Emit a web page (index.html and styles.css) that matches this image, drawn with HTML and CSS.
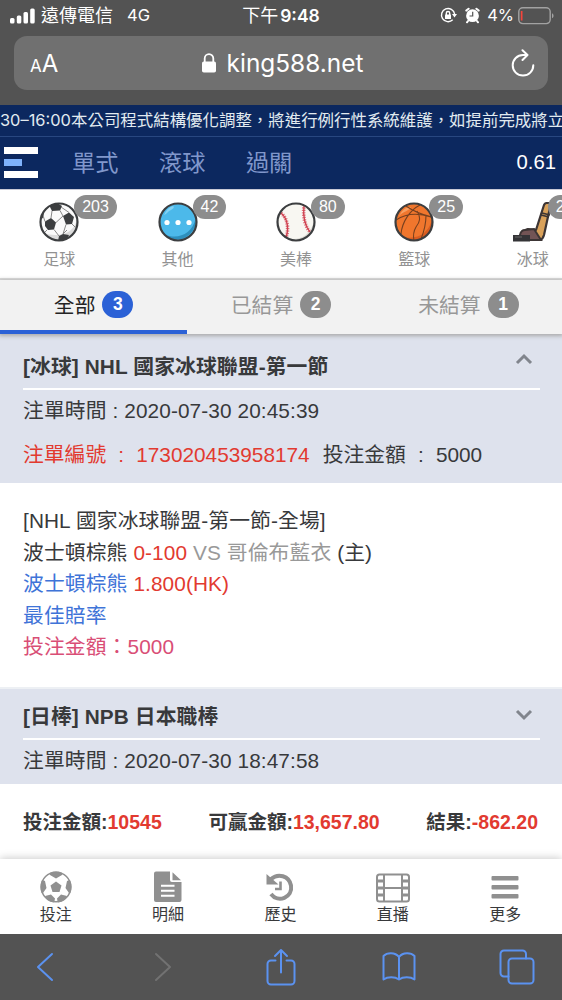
FILE: index.html
```html
<!DOCTYPE html>
<html lang="zh-Hant">
<head>
<meta charset="utf-8">
<title>king588.net</title>
<link rel="stylesheet" href="styles.css">
</head>
<body>
<div class="phone">
  <header class="browser-top">
    <div class="status">
      <div class="status-left">
        <svg class="signal" width="26" height="17" viewBox="0 0 26 17" fill="#fff"><rect x="0" y="11" width="4.500" height="5.500" rx="1.500"/><rect x="6.800" y="8.500" width="4.500" height="8" rx="1.500"/><rect x="13.500" y="5" width="4.500" height="11.500" rx="1.500"/><rect x="20.200" y="1.500" width="4.500" height="15" rx="1.500"/></svg>
        <span class="carrier">遠傳電信</span><span class="network">4G</span>
      </div>
      <div class="clock"><span>下午</span><b>9:48</b></div>
      <div class="status-right">
        <svg width="17" height="17" viewBox="0 0 17 17" fill="none" stroke="#fff" stroke-width="1.400"><path d="M12.700 12.800A6.600 6.600 0 1 1 14.600 7"/><path d="M12 7h5l-2.500 3.500z" fill="#fff" stroke="none"/><rect x="5" y="7.600" width="6" height="4.400" rx=".6" fill="#fff" stroke="none"/><path d="M6.300 8V6.200a1.700 1.700 0 0 1 3.400 0V8"/></svg>
        <svg class="alarm" width="15" height="17" viewBox="0 0 15 17"><circle cx="7.500" cy="8.700" r="6.400" fill="#fff"/><path d="M1.300 3.600L3.600 1.700M13.700 3.600L11.400 1.700M3 14l-1 1.300M12 14l1 1.300" stroke="#fff" stroke-width="2" stroke-linecap="round"/><path d="M7.700 4.700v4.300H4.500" stroke="#535353" stroke-width="1.200" fill="none"/></svg>
        <span class="percent">4%</span>
        <svg class="battery" width="36" height="18" viewBox="0 0 36 18"><rect x=".8" y=".8" width="31.400" height="15.800" rx="4" fill="none" stroke="#a2a2a2" stroke-width="1.400"/><rect x="2.800" y="4" width="1.700" height="9.500" fill="#f5453c"/><path d="M34 6.300c2 .8 2 4.200 0 5z" fill="#a2a2a2"/></svg>
      </div>
    </div>
    <div class="address">
      <span class="reader"><small>A</small>A</span>
      <span class="host"><svg width="14" height="20" viewBox="0 0 14 20"><rect x="0" y="8.500" width="14" height="11" rx="1.800" fill="#fff"/><path d="M2.700 9V5.500a4.300 4.300 0 0 1 8.600 0V9" fill="none" stroke="#fff" stroke-width="1.800"/></svg><span>king588.net</span></span>
      <svg class="reload" width="24" height="28" viewBox="0 0 24 28" fill="none" stroke="#fff" stroke-width="2" stroke-linecap="round" stroke-linejoin="round"><path d="M16 6H12a10.300 10.300 0 1 0 10.300 10.300M11.500 1.200L16.500 6l-5 5"/></svg>
    </div>
  </header>

  <div class="marquee"><span class="range">30–16:00</span>本公司程式結構優化調整，將進行例行性系統維護，如提前完成將立</div>
  <nav class="modes">
    <div class="menu"><i></i><i></i><i></i></div>
    <span>單式</span><span>滾球</span><span>過關</span>
    <b class="balance">0.61</b>
  </nav>

  <section class="sports">
    <div class="sport"><div class="ball">
      <svg width="40" height="40" viewBox="0 0 40 40"><defs><clipPath id="c1"><circle cx="20" cy="20" r="18.500"/></clipPath></defs><circle cx="20" cy="20" r="18.500" fill="#fafafa"/><g clip-path="url(#c1)"><path d="M38 14c0 12-9 19-22 19-4 0-8-1-12-2l8 9h27z" fill="#dcdcdc"/><g fill="#3c3e40"><path d="M10 3l8-2 5 3-2 4.500-8 .5z"/><path d="M6 19.500l6-3.500 5 4.500-2 7-6 .5-3-4z"/><path d="M24 14l6-3.500 5 4.500-2 7-6 .5z"/><path d="M20 34l4-2 6 1-3 6h-8z"/><path d="M1 11l4-4-.5 8-3.500 4z"/></g><path d="M13 9l-1 7M21 8.500l3 5.500M17 20.500l7-6.500M15 27.500l5 6.500M27 22.500L24 32M5 7l5-2M4.500 15L6 19.500M8 28l-3 3M33 22l3 3M22 5l8 5.500M24 32l4-4" fill="none" stroke="#888" stroke-width="1"/></g><circle cx="20" cy="20" r="18.500" fill="none" stroke="#3c3e40" stroke-width="2.200"/></svg>
      <span class="count">203</span></div><span class="label">足球</span></div>
    <div class="sport"><div class="ball">
      <svg width="40" height="40" viewBox="0 0 40 40"><circle cx="20" cy="20" r="18.500" fill="#4cb9ea"/><path d="M37.500 17a18.500 18.500 0 0 1-31 15.500C20 38 34 32 37.500 17z" fill="#2d8fbd"/><path d="M6 13c2-5 5-8 9-9 2 1 0 3-2 4-3 1-4 4-7 5z" fill="#83d2f4"/><circle cx="20" cy="20" r="18.500" fill="none" stroke="#3c3e40" stroke-width="2.200"/><g fill="#fff"><circle cx="9" cy="20.500" r="2.600"/><circle cx="20" cy="20.500" r="2.600"/><circle cx="31" cy="20.500" r="2.600"/></g></svg>
      <span class="count">42</span></div><span class="label">其他</span></div>
    <div class="sport"><div class="ball">
      <svg width="40" height="40" viewBox="0 0 40 40"><circle cx="20" cy="20" r="18.500" fill="#f8f7f2"/><path d="M37.500 21A18 18 0 0 1 14 37c12 1 20-5 23.500-16z" fill="#deddd6"/><g fill="none" stroke="#df7880"><path d="M5 11c7 6 8 16 5 25M28 3c-1 10 0 20 6 27" stroke-width="3.600" stroke-dasharray="1.200 1.200"/><path d="M5 11c7 6 8 16 5 25M28 3c-1 10 0 20 6 27" stroke="#cf4050" stroke-width="1.300"/></g><circle cx="20" cy="20" r="18.500" fill="none" stroke="#3c3e40" stroke-width="2.200"/></svg>
      <span class="count">80</span></div><span class="label">美棒</span></div>
    <div class="sport"><div class="ball">
      <svg width="40" height="40" viewBox="0 0 40 40"><circle cx="20" cy="20" r="18.500" fill="#f0762d"/><path d="M38 17A18.500 18.500 0 0 1 9 35c15 3 26-4 29-18z" fill="#d95c20"/><path d="M5 14c3-6 7-9 12-9-2 4-7 4-12 9z" fill="#f6a064"/><path d="M12 4c7 5 13 8 26 11M26 3C16 8 8 20 7 32M2 18c9-6 20-8 35-3M23 9c4 7 3 11-1 16-3 5-3 9-2 14M32 13c0 8-1 14-5 24" fill="none" stroke="#77401f" stroke-width="1.100"/><circle cx="20" cy="20" r="18.500" fill="none" stroke="#3c3e40" stroke-width="2.200"/></svg>
      <span class="count">25</span></div><span class="label">籃球</span></div>
    <div class="sport"><div class="ball">
      <svg width="40" height="40" viewBox="0 0 40 40"><path d="M31 3q1-2 3-2h4l-7 32q-1 4-4 5H15l-7-5 2-4 5-2 8 1z" fill="#d9a15a" stroke="#3c3535" stroke-width="2.200" stroke-linejoin="round"/><path d="M7 33q1-5 5-5l9-1 7 11H9z" fill="#725455" stroke="#3c3535" stroke-width="2"/><path d="M28 13l8 2M29 11l8 2" stroke="#3c3535" stroke-width="1.800"/><rect x="0" y="33" width="17" height="6.500" fill="#343437"/><path d="M2 35h7" stroke="#666" stroke-width="1"/></svg>
      <span class="count last">21</span></div><span class="label">冰球</span></div>
  </section>

  <div class="tabs">
    <div class="tab active">全部<b>3</b></div>
    <div class="tab">已結算<b>2</b></div>
    <div class="tab">未結算<b>1</b></div>
  </div>

  <main class="bets">
    <section class="bet-head first">
      <div class="bet-title"><span>[冰球] NHL 國家冰球聯盟-第一節</span><svg width="18" height="12" viewBox="0 0 18 12"><path d="M2 10l7-7 7 7" fill="none" stroke="#81858d" stroke-width="3"/></svg></div>
      <div class="bet-time">注單時間 : 2020-07-30 20:45:39</div>
      <div class="bet-number"><span class="red">注單編號</span><span class="red colon">:</span><span class="red number">173020453958174</span><span>投注金額</span><span class="colon">:</span><span>5000</span></div>
    </section>
    <section class="bet-detail">
      <div>[NHL 國家冰球聯盟-第一節-全場]</div>
      <div>波士頓棕熊 <span class="red">0-100</span> <span class="gray">VS 哥倫布藍衣</span> (主)</div>
      <div><span class="blue">波士頓棕熊</span> <span class="red">1.800(HK)</span></div>
      <div class="blue">最佳賠率</div>
      <div class="pink">投注金額：5000</div>
    </section>
    <section class="bet-head second">
      <div class="bet-title"><span>[日棒] NPB 日本職棒</span><svg width="18" height="12" viewBox="0 0 18 12"><path d="M2 2l7 7 7-7" fill="none" stroke="#81858d" stroke-width="3"/></svg></div>
      <div class="bet-time">注單時間 : 2020-07-30 18:47:58</div>
    </section>
  </main>

  <section class="summary">
    <div>投注金額:<span class="red">10545</span></div>
    <div>可贏金額:<span class="red">13,657.80</span></div>
    <div>結果:<span class="red">-862.20</span></div>
  </section>

  <nav class="bottom-nav">
    <div><svg width="32" height="32" viewBox="0 0 32 32"><defs><clipPath id="c2"><circle cx="16" cy="16" r="15.500"/></clipPath></defs><g clip-path="url(#c2)" fill="#909090"><path d="M16 10.500l5.500 4-2 6.500h-7l-2-6.500zM9 0h14l-1 4-6 3.500L10 4zM0 8l5 2 1.500 7-3.500 5H0zM32 8l-5 2-1.500 7 3.500 5h3zM5 25l6-1.500 4 4-1 5H8zM27 25l-6-1.500-4 4 1 5h6z"/></g><circle cx="16" cy="16" r="14.800" fill="none" stroke="#909090" stroke-width="1.500"/></svg><span>投注</span></div>
    <div><svg width="32" height="32" viewBox="0 0 32 32"><path d="M4 .5h14V9a2 2 0 0 0 2 2h9.500v18a2 2 0 0 1-2 2H4a2 2 0 0 1-2-2V2.500a2 2 0 0 1 2-2zM20.500 1.300L29 9.300h-8.500z" fill="#909090"/><path d="M9 14.800h13.500M9 19.800h13.500M9 24.800h13.500" stroke="#fff" stroke-width="2"/></svg><span>明細</span></div>
    <div><svg width="32" height="32" viewBox="0 0 32 32"><path d="M7 8C14 2 25 4.500 27 14.500c2 12-13 18-20 8.500" fill="none" stroke="#909090" stroke-width="4"/><path d="M2.500 3l12 10.500h-12z" fill="#909090"/><path d="M16.500 10.500v7.500h-5.500" fill="none" stroke="#909090" stroke-width="2.600"/></svg><span>歷史</span></div>
    <div><svg width="34" height="32" viewBox="0 0 34 32" fill="none" stroke="#909090"><rect x="1" y="3.500" width="32" height="27" rx="2.500" stroke-width="2"/><path d="M8 4v26M26 4v26" stroke-width="2"/><path d="M8 17h18" stroke-width="2"/><path d="M2 10h6M2 17h6M2 24h6M26 10h6M26 17h6M26 24h6" stroke-width="2.800"/></svg><span>直播</span></div>
    <div><svg width="32" height="32" viewBox="0 0 32 32"><g fill="#909090"><rect x="2.500" y="5" width="27" height="4.600" rx="1"/><rect x="2.500" y="14" width="27" height="4.600" rx="1"/><rect x="2.500" y="23" width="27" height="4.600" rx="1"/></g></svg><span>更多</span></div>
  </nav>

  <footer class="browser-tools">
    <svg width="18" height="30" viewBox="0 0 18 30"><path d="M16 2L2 15l14 13"/></svg>
    <svg class="disabled" width="18" height="30" viewBox="0 0 18 30"><path d="M2 2l14 13L2 28"/></svg>
    <svg width="32" height="38" viewBox="0 0 32 38"><path d="M10.500 12.500H6a3.500 3.500 0 0 0-3.500 3.500v17A3.500 3.500 0 0 0 6 36.500h20a3.500 3.500 0 0 0 3.500-3.500V16a3.500 3.500 0 0 0-3.500-3.500h-4.500M16 24.500V2M10 8l6-6 6 6"/></svg>
    <svg width="34" height="30" viewBox="0 0 34 30"><path d="M17 5v22.500M17 5C13 0 5 .5 1.500 4v23.500c4-3 11.500-3 15.500 0 4-3 11.500-3 15.500 0V4C29 .5 21 0 17 5z"/></svg>
    <svg width="36" height="36" viewBox="0 0 36 36"><path d="M9.500 27.500H5A3.500 3.500 0 0 1 1.500 24V5A3.500 3.500 0 0 1 5 1.500h18.500A3.500 3.500 0 0 1 27 5v4.500"/><rect x="9.500" y="9.500" width="25" height="25" rx="3.500"/></svg>
  </footer>
</div>
</body>
</html>
```
FILE: styles.css
```css
* { box-sizing: border-box; }
body { margin: 0; background: #fff; }
svg { display: block; flex: none; }

.phone {
  width: 562px;
  height: 1000px;
  overflow: hidden;
  display: flex;
  flex-direction: column;
  font-family: "Liberation Sans", "Noto Sans CJK TC", sans-serif;
  font-size: 20.8px;
  color: #38393b;
  white-space: nowrap;
}

/* Browser status and address bars */
.browser-top {
  height: 105px;
  flex: none;
  background: #535353;
  color: #fff;
  font-family: Inter, "Noto Sans CJK TC", sans-serif;
}
.status {
  height: 36px;
  padding: 0 8px 5px 10px;
  display: grid;
  grid-template-columns: 1fr auto 1fr;
  align-items: center;
  font-size: 17px;
  line-height: 31px;
}
.status-left, .status-right, .clock { display: flex; align-items: center; }
.carrier { margin-left: 5px; font-size: 18px; }
.network { margin-left: 14px; font-size: 16.5px; }
.clock span { font-size: 18px; }
.clock b { font-size: 17.5px; font-weight: 600; margin: 0 2px 0 2px; }
.status-right { justify-content: flex-end; }
.alarm { margin-left: 8px; }
.percent { margin: 0 4px 0 7px; font-size: 16.5px; }
.address {
  height: 54px;
  margin: 0 14px;
  padding: 0 13px 0 16px;
  border-radius: 13px;
  background: #707070;
  display: grid;
  grid-template-columns: 1fr auto 1fr;
  align-items: center;
}
.reader { font-size: 24px; }
.reader small { font-size: 17px; }
.host { display: flex; align-items: center; gap: 11px; font-size: 24.4px; }
.reload { justify-self: end; }

/* Site header */
.marquee {
  height: 32px;
  flex: none;
  background: #0c285f;
  border-bottom: 1px solid #284780;
  color: #e2ebf0;
  font-size: 16.45px;
  line-height: 31px;
  overflow: hidden;
}
.range { display: inline-block; width: 71px; font-family: Inter, sans-serif; font-size: 16.4px; }
.modes {
  height: 52px;
  flex: none;
  padding: 0 6px 0 4px;
  background: #0c285f;
  border-bottom: 1px solid #0c285f;
  display: flex;
  align-items: center;
  font-size: 23.2px;
  color: #8097cb;
}
.modes > span { margin-right: 40.6px; padding-bottom: 3px; }
.menu { width: 34px; display: grid; gap: 5px; margin-right: 34px; }
.menu i { height: 7px; background: #fff; }
.menu i:nth-child(2) { width: 18px; background: #7fb2fb; }
.balance { margin-left: auto; font-size: 20.3px; font-weight: 400; color: #fff; }

/* Sports strip */
.sports {
  height: 91px;
  flex: none;
  padding-top: 12px;
  background: #fff;
  border-top: 1px solid #c9cad6;
  border-bottom: 2px solid #dcdcdc;
  display: grid;
  grid-template-columns: repeat(5, 118.4px);
}
.sport { display: flex; flex-direction: column; align-items: center; gap: 6px; }
.ball { position: relative; width: 40px; height: 40px; }
.count {
  position: absolute;
  left: 35px;
  top: -7px;
  height: 24px;
  padding: 0 8px;
  border-radius: 12px;
  background: #8d8d8d;
  color: #fff;
  font-size: 16px;
  line-height: 23px;
}
.label { font-size: 16px; line-height: 24px; color: #929292; }

.tabs {
  position: relative;
  z-index: 1;
  height: 54px;
  flex: none;
  display: grid;
  grid-template-columns: repeat(3, 1fr);
  background: #f2f2f2;
  box-shadow: 0 1px 4px 1px #aaa;
}
.tab {
  padding-bottom: 2px;
  border-bottom: 4px solid transparent;
  display: flex;
  justify-content: center;
  align-items: center;
  color: #989898;
}
.tab.active { color: #242424; border-color: #2b61d6; }
.tab b {
  width: 31px;
  height: 27px;
  margin-left: 7px;
  border-radius: 14px;
  background: #8d8d8d;
  color: #fff;
  font-size: 17.5px;
  line-height: 27px;
  text-align: center;
}
.tab.active b { background: #2b61d6; }

/* Bet records */
.bets { height: 450px; flex: none; letter-spacing: .1px; }
.bet-head { padding: 0 22px 0 23px; background: #dee2ed; }
.first { height: 149px; padding-top: 10px; }
.second { height: 97px; padding-top: 5px; border-top: 2px solid #edf0f4; }
.bet-title {
  height: 46px;
  padding-bottom: 3px;
  border-bottom: 2px solid #fff;
  display: flex;
  justify-content: space-between;
  align-items: center;
  font-weight: 700;
  font-size: 20.8px;
}
.bet-title svg { margin-right: 7px; position: relative; top: -6px; }
.second .bet-title svg { top: 0; }
.bet-time { height: 43px; line-height: 42px; }
.bet-number { display: flex; line-height: 44px; letter-spacing: 0; }
.colon { width: 30px; text-align: center; }
.number { margin-right: 13px; }
.red { color: #e23a30; }
.blue { color: #3f74d8; }
.gray { color: #999; }
.pink { color: #d94e76; }
.bet-detail { height: 204px; padding: 22px 23px 0; line-height: 31.5px; background: #fff; }

.summary {
  height: 75px;
  flex: none;
  padding: 0 24px 2px 23px;
  display: flex;
  justify-content: space-between;
  align-items: center;
  background: #fff;
  font-size: 19.5px;
  font-weight: 700;
}
.bottom-nav {
  position: relative;
  height: 75px;
  flex: none;
  padding-top: 12px;
  display: grid;
  grid-template-columns: repeat(5, 112.4px);
  margin-left: -.5px;
  background: #fff;
  box-shadow: 0 -1px 8px #ccc;
}
.bottom-nav div { display: flex; flex-direction: column; align-items: center; }
.bottom-nav span { font-size: 16px; line-height: 24px; color: #38393b; }

.browser-tools {
  position: relative;
  height: 66px;
  flex: none;
  display: grid;
  grid-template-columns: repeat(5, 118px);
  justify-content: center;
  justify-items: center;
  align-items: center;
  background: #535353;
}
.browser-tools svg { fill: none; stroke: #5b92f0; stroke-width: 2; stroke-linecap: round; stroke-linejoin: round; }
.browser-tools .disabled { stroke: #727272; }
```
